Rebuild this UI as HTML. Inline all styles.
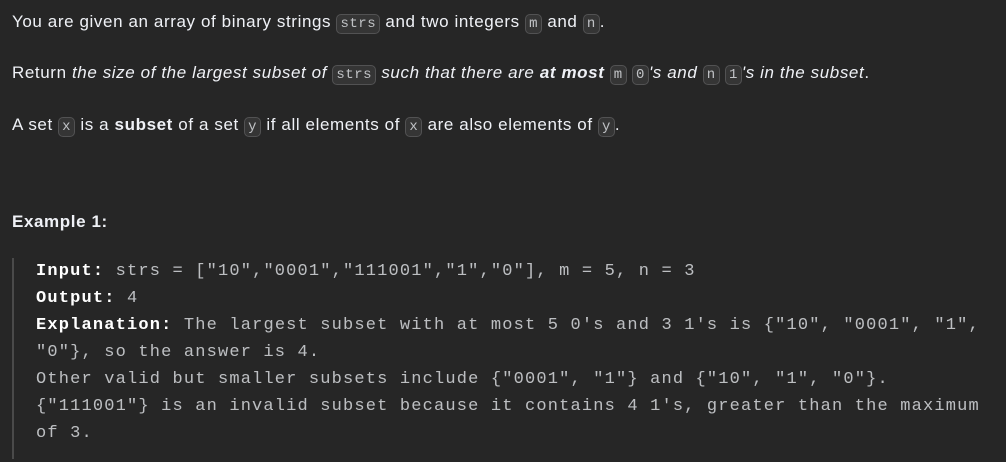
<!DOCTYPE html>
<html style="overflow:hidden;height:462px"><head><style>
body{margin:0;background:#262626;width:1006px;height:462px;overflow:hidden;position:relative;color:#eff1f6;font-family:"Liberation Sans",sans-serif;font-size:17px;letter-spacing:0.6px}
p{position:absolute;left:12px;margin:0;white-space:nowrap;line-height:24px}
code{font-family:"Liberation Mono",monospace;font-size:14px;font-style:normal;letter-spacing:0.5px;background:#ffffff12;border:1px solid #f7faff26;border-radius:5px;padding:1px 3px;color:#eff1f6bf}
.pre{position:absolute;left:12px;top:258px;border-left:2px solid #4a4a4a;padding-left:22px;padding-bottom:12px;font-family:"Liberation Mono",monospace;font-size:17px;letter-spacing:1.17px;line-height:27px;color:#eff1f6bf;white-space:pre}
.pre b{color:#fff}
</style></head><body>
<p style="top:10px">You are given an array of binary strings <code>strs</code> and two integers <code>m</code> and <code>n</code>.</p>
<p style="top:61px">Return <i>the size of the largest subset of <code>strs</code> such that there are <b>at most</b> <code>m</code> <code>0</code>'s and <code>n</code> <code>1</code>'s in the subset</i>.</p>
<p style="top:113px">A set <code>x</code> is a <b>subset</b> of a set <code>y</code> if all elements of <code>x</code> are also elements of <code>y</code>.</p>
<p style="top:210px"><b>Example 1:</b></p>
<div class="pre"><b>Input:</b> strs = ["10","0001","111001","1","0"], m = 5, n = 3
<b>Output:</b> 4
<b>Explanation:</b> The largest subset with at most 5 0's and 3 1's is {"10", "0001", "1",
"0"}, so the answer is 4.
Other valid but smaller subsets include {"0001", "1"} and {"10", "1", "0"}.
{"111001"} is an invalid subset because it contains 4 1's, greater than the maximum
of 3.</div>
</body></html>
